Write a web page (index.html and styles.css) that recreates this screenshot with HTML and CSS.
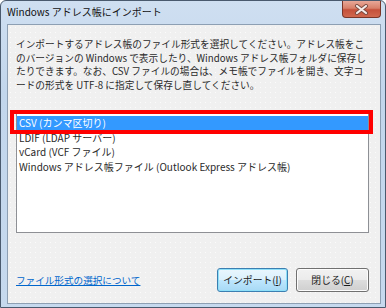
FILE: index.html
```html
<!DOCTYPE html>
<html lang="ja">
<head>
  <meta charset="UTF-8" />
  <title>Windows アドレス帳にインポート</title>
  <link rel="stylesheet" href="styles.css">
</head>
<body>
  <div class="window">
    <div class="titlebar">
      <div class="title">Windows アドレス帳にインポート</div>
      <div class="close-x">
        <svg width="15" height="11" viewBox="0 0 15 11">
          <path d="M3 2 L12 9 M12 2 L3 9" stroke="#7a4a40" stroke-width="4" stroke-linecap="round"/>
          <path d="M3 2 L12 9 M12 2 L3 9" stroke="#f4ecea" stroke-width="2.2" stroke-linecap="round"/>
        </svg>
      </div>
    </div>

    <div class="client">
      <p class="intro">インポートするアドレス帳のファイル形式を選択してください。アドレス帳をこのバージョンの Windows で表示したり、Windows アドレス帳フォルダに保存したりできます。なお、CSV ファイルの場合は、メモ帳でファイルを開き、文字コードの形式を UTF-8 に指定して保存し直してください。</p>

      <ul class="listbox">
        <li class="selected">CSV (カンマ区切り)</li>
        <li>LDIF (LDAP サーバー)</li>
        <li>vCard (VCF ファイル)</li>
        <li>Windows アドレス帳ファイル (Outlook Express アドレス帳)</li>
      </ul>

      <div class="mark"></div>

      <div class="footer">
        <a href="#" class="help">ファイル形式の選択について</a>
        <div class="buttons">
          <button class="btn default">インポート(<u>I</u>)</button>
          <button class="btn">閉じる(<u>C</u>)</button>
        </div>
      </div>
    </div>
  </div>
</body>
</html>
```

FILE: styles.css
```css
* {
  margin: 0;
  padding: 0;
  box-sizing: border-box;
}

body {
  width: 386px;
  height: 308px;
  overflow: hidden;
  background: #ffffff;
  font-family: "Noto Sans CJK JP", "Noto Sans", sans-serif;
  font-size: 9.7px;
  color: #2a2a2a;
}

.window {
  width: 386px;
  height: 308px;
  display: flex;
  flex-direction: column;
  border: 1px solid #4a5a6e;
  border-radius: 6px 6px 0 0;
  background: linear-gradient(to bottom, #cfdff1, #c2d6ec 30%, #c6d9ee 100%);
}

.titlebar {
  height: 23px;
  display: flex;
  align-items: flex-start;
  padding-left: 6px;
}

.title {
  font-size: 10px;
  line-height: 22px;
  color: #111;
}

.close-x {
  margin-left: auto;
  margin-right: 4px;
  width: 39px;
  height: 17px;
  display: flex;
  align-items: center;
  justify-content: center;
  border: 1px solid #7a3528;
  border-top: none;
  border-radius: 0 0 4px 4px;
  background: linear-gradient(to bottom, #e8a898, #d8806a 45%, #c5503a 55%, #d0684e);
}

.client {
  flex: 1;
  position: relative;
  display: flex;
  flex-direction: column;
  margin: 0 4px 3px 6px;
  padding: 13px 11px 11px 8px;
  border: 1px solid #8d9fb3;
  background-color: #f0f0f0;
  background-image: radial-gradient(circle, #fbfbfb 0.7px, transparent 1px);
  background-size: 5px 5px;
}

.intro {
  line-height: 13.5px;
}

.listbox {
  list-style: none;
  margin-top: 20px;
  width: 353px;
  height: 121px;
  padding-top: 3px;
  border: 1px solid #8e9095;
  background: #ffffff;
  font-size: 10px;
}

.listbox li {
  height: 14.5px;
  line-height: 14.5px;
  padding-left: 2px;
  white-space: nowrap;
}

.listbox .selected {
  background: #3399ff;
  color: #ffffff;
}

.mark {
  position: absolute;
  left: 2px;
  top: 85px;
  width: 363px;
  height: 24px;
  border: 4px solid #ff0000;
}

.footer {
  margin-top: auto;
  display: flex;
  align-items: center;
}

.help {
  color: #0066cc;
  font-size: 9.6px;
}

.buttons {
  margin-left: auto;
  display: flex;
  gap: 8px;
}

.btn {
  width: 73px;
  height: 24px;
  font-family: inherit;
  font-size: 9.8px;
  color: #1a1a1a;
  border: 1px solid #707070;
  border-radius: 3px;
  background: linear-gradient(to bottom, #f2f2f2, #ebebeb 50%, #dddddd 51%, #cfcfcf);
  box-shadow: inset 0 0 0 1px #fcfcfc;
}

.btn.default {
  width: 71px;
  border-color: #3c7fb1;
  background: linear-gradient(to bottom, #eaf6fd, #d9f0fc 50%, #bee6fd 51%, #a7d9f5);
  box-shadow: inset 0 0 0 1px #8ee0f9;
}

.btn u {
  text-decoration: underline;
}
```
